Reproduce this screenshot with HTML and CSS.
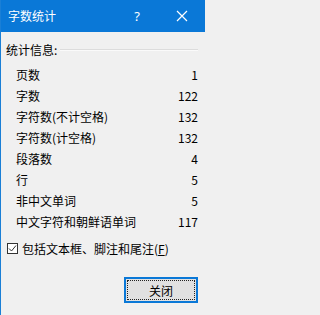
FILE: index.html
```html
<!DOCTYPE html>
<html lang="zh-CN">
<head>
<meta charset="utf-8">
<link rel="stylesheet" href="styles.css">
</head>
<body>
<div class="window">
  <div class="titlebar">
    <span class="title">字数统计</span>
    <span class="help">?</span>
    <span class="close">
      <svg width="12" height="12" viewBox="0 0 12 12"><path d="M1 1L11 11M11 1L1 11" stroke="#fff" stroke-width="1.2" fill="none"/></svg>
    </span>
  </div>
  <div class="content">
    <div class="group-head"><span>统计信息:</span><span class="rule"></span></div>
    <div class="stats">
      <div class="row"><span>页数</span><span>1</span></div>
      <div class="row"><span>字数</span><span>122</span></div>
      <div class="row"><span>字符数(不计空格)</span><span>132</span></div>
      <div class="row"><span>字符数(计空格)</span><span>132</span></div>
      <div class="row"><span>段落数</span><span>4</span></div>
      <div class="row"><span>行</span><span>5</span></div>
      <div class="row"><span>非中文单词</span><span>5</span></div>
      <div class="row"><span>中文字符和朝鲜语单词</span><span>117</span></div>
    </div>
    <label class="check">
      <span class="box"><svg width="11" height="11" viewBox="0 0 11 11"><path d="M2 5.5L4.5 8L9 2.5" stroke="#333" stroke-width="1" fill="none"/></svg></span>
      <span>包括文本框、脚注和尾注(<u>F</u>)</span>
    </label>
    <div class="actions">
      <button class="btn"><span class="focus">关闭</span></button>
    </div>
  </div>
</div>
</body>
</html>
```
FILE: styles.css
```css
html, body {
  margin: 0;
  padding: 0;
}
body {
  width: 205px;
  height: 315px;
  overflow: hidden;
  background: #f0f0f0;
  font-family: "Noto Sans CJK SC", "Noto Sans", sans-serif;
  font-size: 12px;
  color: #000;
}
.window {
  height: 315px;
  border-left: 1px solid #1a7fd6;
  box-sizing: border-box;
  display: flex;
  flex-direction: column;
}
.titlebar {
  height: 32px;
  background: #0a78d7;
  color: #fff;
  display: flex;
  align-items: center;
  padding-left: 7px;
}
.title {
  font-size: 12px;
  flex: 1;
  line-height: 32px;
}
.help {
  width: 22px;
  text-align: center;
  font-family: "Noto Sans", sans-serif;
  font-size: 13px;
  margin-right: 23px;
}
.close {
  width: 22px;
  display: flex;
  justify-content: center;
  margin-right: 12px;
}
.content {
  padding: 9px 7px 0 5px;
  display: flex;
  flex-direction: column;
}
.group-head {
  display: flex;
  align-items: center;
  line-height: 18px;
  height: 18px;
}
.rule {
  flex: 1;
  height: 0;
  border-top: 1px solid #dcdcdc;
  border-bottom: 1px solid #fafafa;
  margin-left: 3px;
}
.stats {
  margin-top: 5px;
  padding-left: 10px;
}
.row {
  display: flex;
  justify-content: space-between;
  height: 21px;
  line-height: 21px;
}
.check {
  display: flex;
  align-items: center;
  height: 18px;
  margin-top: 7px;
  padding-left: 1px;
}
.box {
  width: 11px;
  height: 11px;
  border: 1px solid #333;
  box-sizing: border-box;
  background: #fff;
  display: flex;
  margin-right: 4px;
}
.box svg {
  margin: -1px;
}
.check u {
  text-decoration: underline;
  text-underline-offset: 1px;
}
.actions {
  display: flex;
  justify-content: flex-end;
  margin-top: 20px;
}
.btn {
  width: 74px;
  height: 26px;
  border: 2px solid #0a78d7;
  background: #e1e1e1;
  padding: 1px;
  font: inherit;
  color: #000;
  display: flex;
  box-sizing: border-box;
}
.focus {
  flex: 1;
  border: 1px dotted #222;
  display: flex;
  align-items: center;
  justify-content: center;
}
```
